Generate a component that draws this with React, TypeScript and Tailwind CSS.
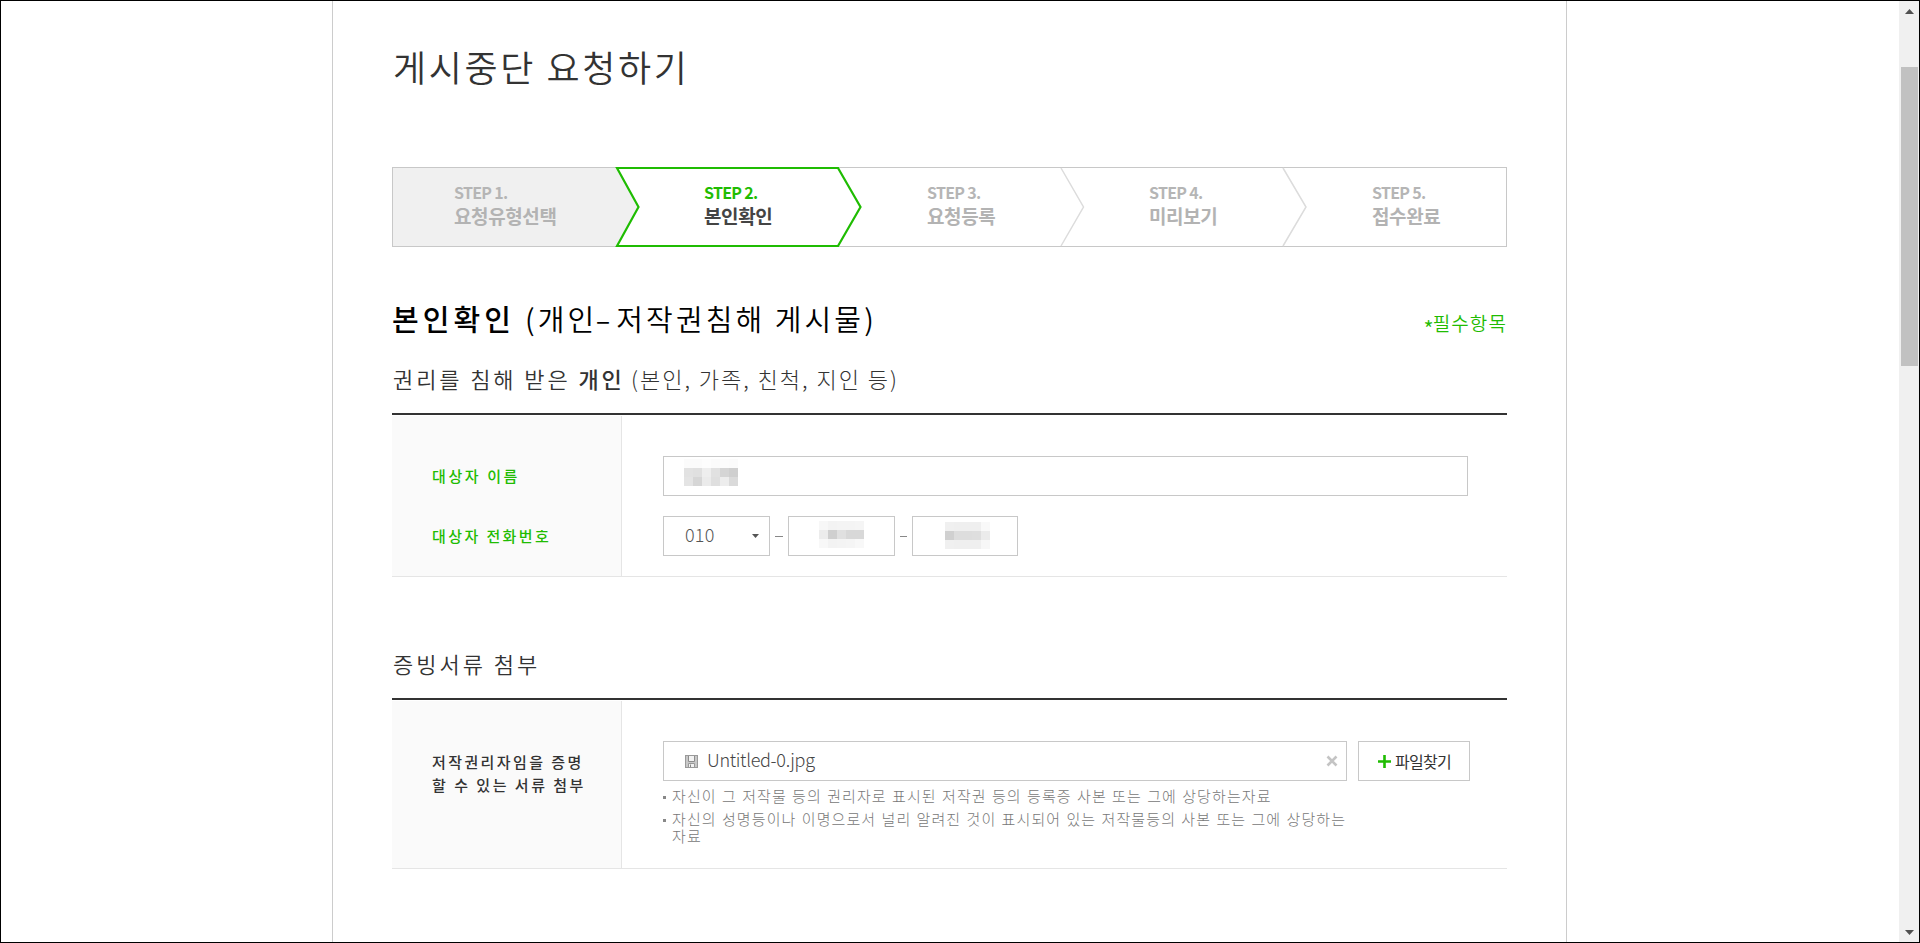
import { ReactNode } from 'react';
import clsx from 'clsx';

const steps = [
  { no: 'STEP 1.', label: '요청유형선택', width: 'w-[223px] pl-[62px]' },
  { no: 'STEP 2.', label: '본인확인', width: 'w-[223px] pl-[89px]', active: true },
  { no: 'STEP 3.', label: '요청등록', width: 'w-[223px] pl-[89px]' },
  { no: 'STEP 4.', label: '미리보기', width: 'w-[222px] pl-[88px]' },
  { no: 'STEP 5.', label: '접수완료', width: 'w-[222px] pl-[89px]' },
];

const nameCells = [
  ['#fbfbfb', '#fbfbfb', '#fdfdfd', '#fbfbfb', '#fcfcfc', '#fbfbfb'],
  ['#e2e2e2', '#e0e0e0', '#eeeeee', '#e1e1e1', '#d5d5d5', '#cfcfcf'],
  ['#e4e4e4', '#d6d6d6', '#ebebeb', '#dfdfdf', '#ededed', '#dadada'],
];

const middleCells = [
  ['#f7f7f7', '#f3f3f3', '#f4f4f4', '#f4f4f4', '#f5f5f5'],
  ['#ececec', '#cfcfcf', '#e0e0e0', '#d8d8d8', '#d8d8d8'],
  ['#f8f8f8', '#f3f3f3', '#f4f4f4', '#f5f5f5', '#f8f8f8'],
];

const lastCells = [
  ['#f0f0f0', '#efefef', '#efefef', '#efefef', '#f9f9f9'],
  ['#d0d0d0', '#dddddd', '#dddddd', '#dedede', '#ebebeb'],
  ['#f0f0f0', '#efefef', '#efefef', '#efefef', '#f7f7f7'],
];

function Mosaic({ cells }: { cells: string[][] }) {
  return (
    <div className="flex flex-col">
      {cells.map((row, y) => (
        <div key={y} className="flex">
          {row.map((color, x) => (
            <span key={x} className="block w-[9px] h-[9px]" style={{ backgroundColor: color }} />
          ))}
        </div>
      ))}
    </div>
  );
}

function StepBar() {
  return (
    <div className="relative mt-[81px] h-20 w-[1115px]">
      <svg className="absolute inset-0" width="1115" height="80" viewBox="0 0 1115 80" fill="none">
        <rect x="0.5" y="0.5" width="1114" height="79" fill="#fff" stroke="#c8c8c8" />
        <path d="M1 1H225L246 40L225 79H1Z" fill="#f0f0f0" />
        <path d="M669 1L691.5 40L669 79M891 1L914 40L891 79" stroke="#dcdcdc" strokeWidth="1.5" />
        <path d="M225 1H446L468.5 40L446 79H225L246.5 40Z" fill="#fff" stroke="#1fbc02" strokeWidth="2.2" />
      </svg>
      <ol className="relative flex h-full">
        {steps.map((step) => (
          <li key={step.no} className={clsx('shrink-0 pt-[15px] font-bold whitespace-nowrap', step.width)}>
            <p className={clsx('h-5 text-[16px] leading-5 tracking-[-0.7px]', step.active ? 'text-[#1fbc02]' : 'text-[#b5b5b5]')}>
              {step.no}
            </p>
            <p className={clsx('mt-0.5 text-[19px] leading-6 tracking-[-0.4px]', step.active ? 'text-[#444]' : 'text-[#b3b3b3]')}>
              {step.label}
            </p>
          </li>
        ))}
      </ol>
    </div>
  );
}

function FormTable({ labels, height, children }: { labels: ReactNode; height: string; children: ReactNode }) {
  return (
    <div className={clsx('mt-[19px] flex w-[1115px] border-t-2 border-t-[#333] border-b border-b-[#e5e5e5]', height)}>
      <div className="mt-px w-[230px] shrink-0 border-r border-[#e5e5e5] bg-[#fafafa] pl-10 text-[15px] font-medium whitespace-nowrap">
        {labels}
      </div>
      <div className="w-[885px] pl-[41px]">{children}</div>
    </div>
  );
}

function Scrollbar() {
  return (
    <div className="flex w-5 shrink-0 flex-col items-center bg-[#f0f0f0] pr-px pl-0.5">
      <svg className="mt-2 h-[5px] w-[9px] shrink-0" viewBox="0 0 9 5">
        <path d="M0 5L4.5 0L9 5Z" fill="#505050" />
      </svg>
      <div className="mt-[53px] h-[299px] w-full bg-[#c1c1c1]" />
      <svg className="mt-auto mb-[7px] h-[5px] w-[9px] shrink-0" viewBox="0 0 9 5">
        <path d="M0 0L4.5 5L9 0Z" fill="#505050" />
      </svg>
    </div>
  );
}

export default function App() {
  return (
    <div className="flex h-[943px] w-[1920px] overflow-hidden border border-black bg-white font-['Noto_Sans_CJK_KR',sans-serif]">
      <div className="flex flex-1 pl-[331px]">
        <main className="w-[1235px] border-x border-[#ccc] pt-[45px] pl-[59px]">
          <h1 className="pl-px text-[36px] leading-10 font-[350] tracking-[2.6px] text-[#333] whitespace-nowrap">게시중단 요청하기</h1>

          <StepBar />

          <div className="mt-[53px] flex h-9 w-[1115px] items-center justify-between whitespace-nowrap">
            <h2 className="text-[29px] leading-9 font-[350] text-black">
              <strong className="inline-block w-[133px] font-medium tracking-[4.1px]">본인확인</strong>
              <span className="tracking-[3.1px]">
                (개인<span className="mr-2 -ml-0.5 inline-block origin-left scale-x-160">-</span>저작권침해 게시물)
              </span>
            </h2>
            <span className="flex pt-[14px] text-[19px] leading-6 font-[350] tracking-[1.1px] text-[#1fbc02]">
              <span className="pt-[5px] text-[22px] tracking-[-1px]">*</span>필수항목
            </span>
          </div>

          {/* 개인 정보 */}
          <h3 className="mt-7 h-[30px] pl-px text-[22px] leading-[29px] font-[350] text-[#333] whitespace-nowrap">
            <span className="inline-block w-[238px] tracking-[2.9px]">
              권리를 침해 받은 <strong className="font-medium">개인</strong>
            </span>
            <span className="font-light tracking-[2px]">(본인, 가족, 친척, 지인 등)</span>
          </h3>
          <FormTable
            height="h-[164px]"
            labels={
              <div className="pt-[50px] leading-5 text-[#1fbc02]">
                <p className="tracking-[2.6px]">대상자 이름</p>
                <p className="mt-10 tracking-[2.4px]">대상자 전화번호</p>
              </div>
            }
          >
            <div className="mt-[41px] h-10 w-[805px] border border-[#c8c8c8] pt-[2px] pl-5">
              <Mosaic cells={nameCells} />
            </div>
            <div className="mt-5 flex items-center text-[#555]">
              <div className="flex h-10 w-[107px] items-center justify-between border border-[#c8c8c8] pr-[10px] pl-[21px]">
                <span className="-mt-1 text-[18px] leading-6 font-light tracking-[0.2px]">010</span>
                <svg width="7" height="4" viewBox="0 0 7 4">
                  <path d="M0 0H7L3.5 4Z" fill="#555" />
                </svg>
              </div>
              <span className="mx-[5px] h-px w-2 bg-[#888]" />
              <div className="flex h-10 w-[107px] border border-[#c8c8c8] pt-1 pl-[30px]">
                <Mosaic cells={middleCells} />
              </div>
              <span className="mr-[5px] ml-[5px] h-px w-[7px] bg-[#888]" />
              <div className="flex h-10 w-[106px] border border-[#c8c8c8] pt-[5px] pl-8">
                <Mosaic cells={lastCells} />
              </div>
            </div>
          </FormTable>

          {/* 증빙서류 */}
          <h3 className="mt-[72px] h-[30px] pl-px text-[22px] leading-[29px] font-[350] tracking-[3px] text-[#333] whitespace-nowrap">증빙서류 첨부</h3>
          <FormTable
            height="h-[171px]"
            labels={
              <div className="pt-[49px] leading-[23px] text-[#333]">
                <p className="tracking-[2.4px]">저작권리자임을 증명</p>
                <p className="tracking-[2.5px]">할 수 있는 서류 첨부</p>
              </div>
            }
          >
            <div className="mt-[41px] flex">
              <div className="flex h-10 w-[684px] items-center border border-[#c8c8c8] pr-2 pl-[21px]">
                <svg width="13" height="13" viewBox="0 0 13 13" fill="none">
                  <rect x="0.5" y="0.5" width="12" height="12" fill="#c8c8c8" stroke="#9a9a9a" />
                  <path d="M3.5 1V6.5H9.5V1" fill="#f2f2f2" stroke="#8d8d8d" />
                  <path d="M3.5 12V8.5H9.5V12" fill="#f2f2f2" stroke="#999" />
                  <path d="M5.5 9.5V12" stroke="#888" />
                </svg>
                <span className="-mt-1 ml-[9px] text-[18px] leading-6 font-light tracking-[-0.3px] text-[#444]">Untitled-0.jpg</span>
                <svg className="ml-auto" width="12" height="12" viewBox="0 0 12 12">
                  <path d="M1.5 1.5L10.5 10.5M10.5 1.5L1.5 10.5" stroke="#c4c4c4" strokeWidth="2.6" />
                </svg>
              </div>
              <button className="ml-[11px] flex h-10 w-28 items-center border border-[#c8c8c8] pl-[19px] text-[16px] tracking-[-0.7px] text-[#333] whitespace-nowrap">
                <svg className="mr-1" width="13" height="13" viewBox="0 0 13 13">
                  <path d="M6.5 0V13M0 6.5H13" stroke="#1fbc02" strokeWidth="2.6" />
                </svg>
                파일찾기
              </button>
            </div>
            <ul className="mt-[7px] font-['Liberation_Sans','Noto_Sans_CJK_KR',sans-serif] text-[15px] leading-[17px] font-light tracking-[1.1px] text-[#777] whitespace-nowrap">
              <li className="flex">
                <span className="mt-2 mr-[6px] h-[3px] w-[3px] bg-[#888]" />
                자신이 그 저작물 등의 권리자로 표시된 저작권 등의 등록증 사본 또는 그에 상당하는자료
              </li>
              <li className="mt-[6px] flex">
                <span className="mt-2 mr-[6px] h-[3px] w-[3px] bg-[#888]" />
                <div>
                  <p>자신의 성명등이나 이명으로서 널리 알려진 것이 표시되어 있는 저작물등의 사본 또는 그에 상당하는</p>
                  <p>자료</p>
                </div>
              </li>
            </ul>
          </FormTable>
        </main>
      </div>
      <Scrollbar />
    </div>
  );
}
